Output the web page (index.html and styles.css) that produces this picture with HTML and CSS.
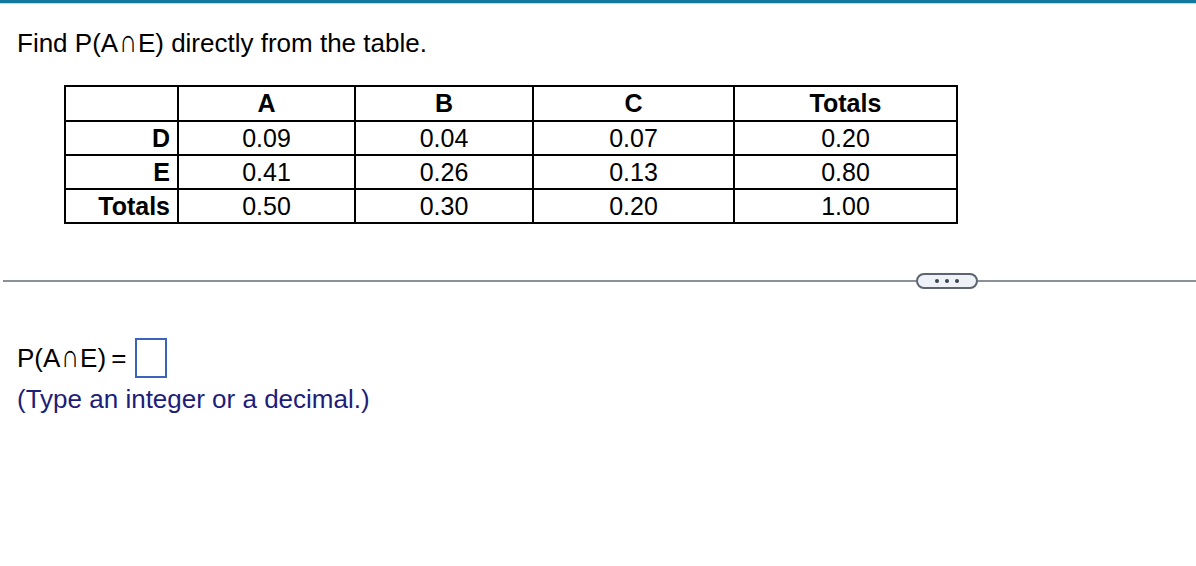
FILE: index.html
```html
<!DOCTYPE html>
<html>
<head>
<meta charset="utf-8">
<link rel="stylesheet" href="styles.css">
</head>
<body>
<div class="topbar"></div>
<div class="question">
  <p class="prompt">Find P(A<span class="cap">∩</span>E) directly from the table.</p>
  <table class="data">
    <colgroup>
      <col class="c0"><col class="c1"><col class="c2"><col class="c3"><col class="c4">
    </colgroup>
    <tr class="head"><th></th><th>A</th><th>B</th><th>C</th><th>Totals</th></tr>
    <tr><th class="rh">D</th><td>0.09</td><td>0.04</td><td>0.07</td><td>0.20</td></tr>
    <tr><th class="rh">E</th><td>0.41</td><td>0.26</td><td>0.13</td><td>0.80</td></tr>
    <tr><th class="rh">Totals</th><td>0.50</td><td>0.30</td><td>0.20</td><td>1.00</td></tr>
  </table>
</div>
<div class="divider">
  <div class="line"></div>
  <div class="more"><span></span><span></span><span></span></div>
  <div class="line grow"></div>
</div>
<div class="answer">
  <div class="eq"><span>P(A<span class="cap">∩</span>E)&#8201;=</span><span class="box"></span></div>
  <div class="hint">(Type an integer or a decimal.)</div>
</div>
</body>
</html>
```
FILE: styles.css
```css
html, body {
  margin: 0;
  padding: 0;
  background: #fff;
}
body {
  font-family: "Liberation Sans", Arial, sans-serif;
  color: #000;
  width: 1196px;
  height: 566px;
  overflow: hidden;
}
.topbar {
  height: 3px;
  background: #13789c;
  border-bottom: 1px solid #b9dcea;
}
.cap {
  display: inline-block;
  font-family: "DejaVu Sans", sans-serif;
  font-size: 0.95em;
  font-weight: 300;
  margin: 0 1px;
  transform: scale(1.0, 1.3);
  transform-origin: 50% 78%;
}
.question {
  padding: 0 0 0 17px;
}
.prompt {
  margin: 24px 0 0 0;
  font-size: 26px;
  line-height: 30px;
}
.data {
  margin: 26px 0 0 47px;
  border-collapse: collapse;
  border: 2px solid #000;
  font-size: 25px;
}
.c0 { width: 113px; }
.c1 { width: 177px; }
.c2 { width: 178px; }
.c3 { width: 201px; }
.c4 { width: 223px; }
.data th, .data td {
  border: 2px solid #000;
  padding: 0 6px;
  text-align: center;
  line-height: 32px;
  font-weight: normal;
}
.data tr.head th {
  font-weight: bold;
  line-height: 33px;
}
.data th.rh {
  font-weight: bold;
  text-align: right;
  padding-right: 7px;
}
.divider {
  display: flex;
  align-items: center;
  margin-top: 49px;
  height: 16px;
}
.line {
  height: 2px;
  background: #8a8f98;
  width: 913px;
  margin-left: 3px;
}
.line.grow {
  flex: 1;
  margin-left: 0;
  width: auto;
}
.more {
  width: 58px;
  height: 12px;
  border: 2px solid #5c6470;
  border-radius: 8px;
  background: #eef1f6;
  display: flex;
  justify-content: center;
  align-items: center;
  gap: 6px;
}
.more span {
  width: 4px;
  height: 4px;
  border-radius: 50%;
  background: #3c4450;
}
.answer {
  padding-left: 17px;
  margin-top: 49px;
}
.eq {
  font-size: 26px;
  line-height: 30px;
  display: flex;
  align-items: center;
  gap: 9px;
}
.box {
  display: inline-block;
  width: 28px;
  height: 36px;
  border: 2px solid #3a63bd;
}
.hint {
  font-size: 26px;
  line-height: 30px;
  color: #1d1d7a;
  margin-top: 6px;
}
```
